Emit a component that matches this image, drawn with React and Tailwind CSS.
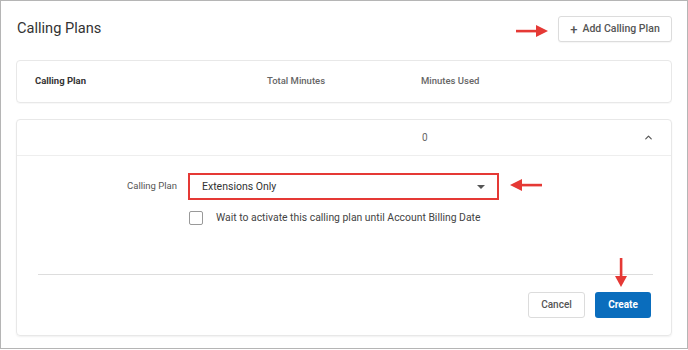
import { ChevronUp } from "lucide-react";

function Arrow({ dir, className }) {
  // little red annotation arrows drawn over the page
  if (dir === "down") {
    return (
      <svg className={className} width="12" height="30" viewBox="0 0 12 30">
        <rect x="4.8" y="0" width="2.6" height="20" fill="#e53935" />
        <polygon points="0,18 12,18 6,29" fill="#e53935" />
      </svg>
    );
  }
  return (
    <svg className={className} width="33" height="12" viewBox="0 0 33 12" style={dir === "left" ? { transform: "scaleX(-1)" } : undefined}>
      <rect x="0" y="4.8" width="22" height="2.6" fill="#e53935" />
      <polygon points="20,0 20,12 32,6" fill="#e53935" />
    </svg>
  );
}

export default function App() {
  return (
    <div className="relative h-[349px] w-[688px] border border-[#b5b5b5] bg-white px-[15px] pt-[15px] font-['Roboto',sans-serif]">
      <div className="flex h-[26px] items-center justify-between">
        <h1 className="pl-[1px] text-[14.6px] text-[#333]">Calling Plans</h1>
        <button className="flex h-[26px] w-[114px] items-center justify-center gap-[5px] rounded-[3px] border border-[#dcdcdc] bg-white text-[10.5px] font-medium text-[#555] shadow-[0_1px_1px_rgba(0,0,0,0.04)]">
          <span className="text-[13px] leading-none">+</span>Add Calling Plan
        </button>
      </div>

      <div className="mt-[18px] grid h-[43px] grid-cols-[232px_154px_1fr] items-center rounded-[4px] border border-[#e8e8e8] pl-[18px] text-[9.5px] font-medium text-[#666] shadow-[0_1px_1px_rgba(0,0,0,0.03)]">
        <span className="font-bold text-[#333]">Calling Plan</span>
        <span>Total Minutes</span>
        <span>Minutes Used</span>
      </div>

      <div className="mt-[16px] rounded-[4px] border border-[#e8e8e8] shadow-[0_1px_2px_rgba(0,0,0,0.06)]">
        <div className="flex h-[36px] items-center border-b border-[#eeeeee] pl-[405px] pr-[17px] text-[10px] text-[#666]">
          <span className="flex-1">0</span>
          <ChevronUp size={11} strokeWidth={2.6} className="text-[#555]" />
        </div>

        <div className="pt-[17px] pb-[17px]">
          <div className="flex items-center">
            <label className="w-[160px] text-right text-[9.5px] text-[#555]">Calling Plan</label>
            <div className="ml-[11px] flex h-[27px] w-[311px] items-center justify-between border-2 border-[#e53935] pl-[12px] pr-[12px] text-[10.5px] text-[#333]">
              <span>Extensions Only</span>
              <span className="h-0 w-0 border-x-[4px] border-t-[4px] border-x-transparent border-t-[#555]" />
            </div>
          </div>

          <div className="mt-[10px] flex items-center pl-[172px]">
            <span className="h-[14px] w-[14px] rounded-[2px] border border-[#999] bg-white" />
            <span className="ml-[13px] text-[10.4px] text-[#444]">Wait to activate this calling plan until Account Billing Date</span>
          </div>

          <div className="mt-[48px] ml-[21px] mr-[18px] border-t border-[#dddddd]" />

          <div className="mt-[17px] flex justify-end gap-[10px] pr-[20px]">
            <button className="h-[26px] w-[57px] rounded-[3px] border border-[#dcdcdc] bg-white text-[10px] font-medium text-[#555]">Cancel</button>
            <button className="h-[26px] w-[56px] rounded-[3px] bg-[#0a6dbd] text-[10px] font-bold text-white">Create</button>
          </div>
        </div>
      </div>

      <Arrow dir="right" className="absolute left-[515px] top-[24px]" />
      <Arrow dir="left" className="absolute left-[508px] top-[178px]" />
      <Arrow dir="down" className="absolute left-[614px] top-[257px]" />
    </div>
  );
}
